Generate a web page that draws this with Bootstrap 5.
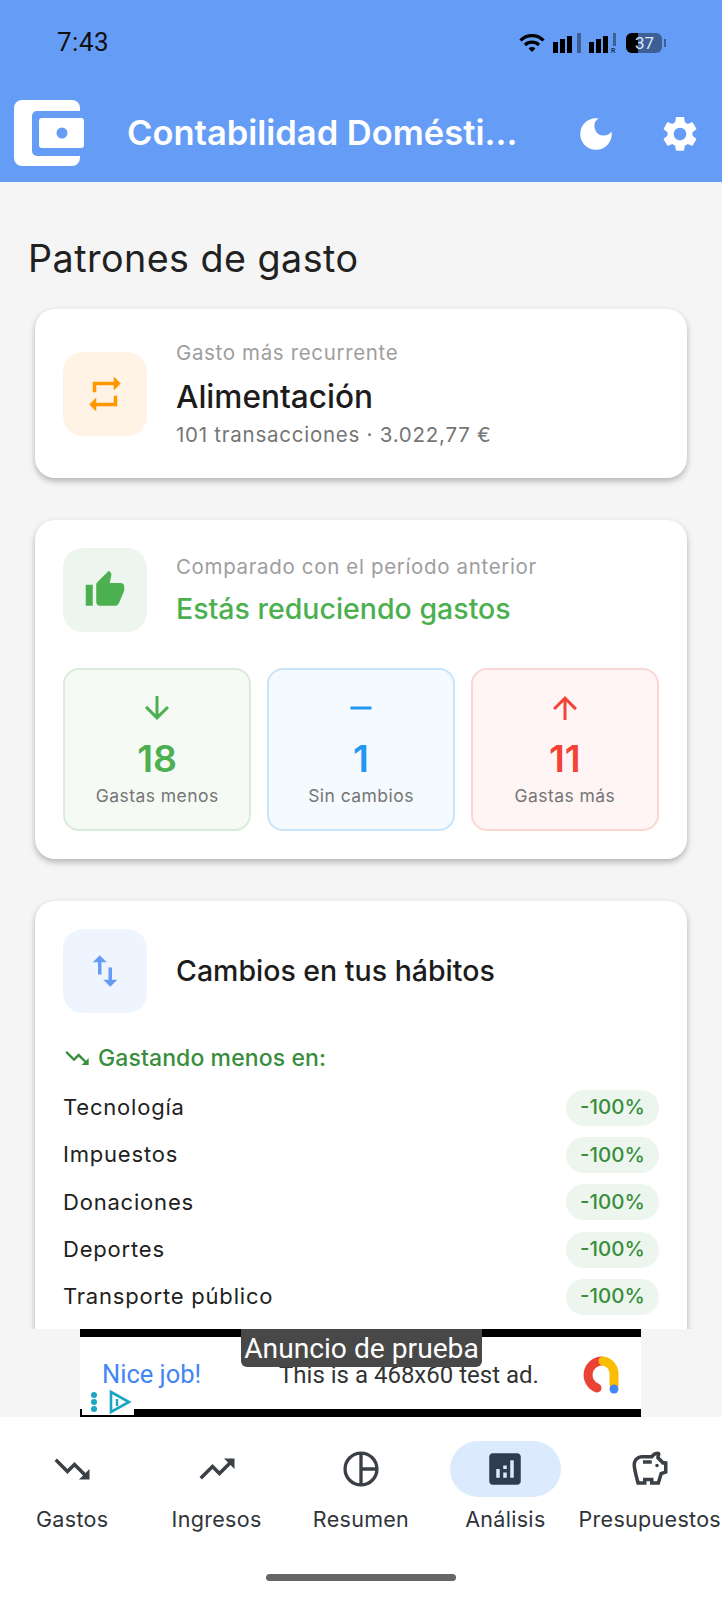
<!DOCTYPE html>
<html lang="es">
<head>
  <meta charset="UTF-8">
  <title>Contabilidad Doméstica</title>
  <meta name="viewport" content="width=device-width, initial-scale=1">
  <link href="https://cdn.jsdelivr.net/npm/bootstrap@5.3.0/dist/css/bootstrap.min.css" rel="stylesheet">
  <style>
    body { background: #f5f5f5; font-family: Inter, "Liberation Sans", sans-serif; color: #1f1f1f; }
    .app-shell { width: 722px; height: 1600px; overflow: hidden; }

    /* barra superior */
    .app-top { background: #659cf6; height: 182px; flex: none; }
    .status-row { height: 85px; padding: 0 56px 0 57px; color: #111; }
    .status-time { font-family: Roboto, sans-serif; font-size: 26px; letter-spacing: .5px; }
    .batt { width: 36px; height: 20px; border-radius: 6px; background: #3d5f96; overflow: hidden; }
    .batt-fill { width: 12px; background: #000; }
    .batt-num { font-family: Roboto, sans-serif; font-size: 17px; line-height: 20px; color: #dfe8f7; padding-left: 1px; }
    .batt-nub { width: 2px; height: 8px; background: #3d5f96; margin-left: 2px; }
    .tool-row { height: 97px; padding: 15px 0 0 14px; }
    .app-title { font-size: 34.5px; font-weight: 600; color: #fff; margin-left: 42px; line-height: 1; white-space: nowrap; }
    .tool-ico { fill: #fff; width: 42px; height: 42px; }

    /* contenido */
    .page-main { flex: 1 1 0; min-height: 0; overflow: hidden; padding: 54px 35px 0; }
    .page-title { font-size: 37.7px; font-weight: 400; line-height: 44px; margin: 0 0 29px -7px; color: #212121; letter-spacing: .45px; }
    .stat-card { border: 0; border-radius: 20px; background: #fff; box-shadow: 0 3px 6px rgba(0,0,0,.28); padding: 28px; margin-bottom: 42px; }
    .ico-box { width: 84px; height: 84px; border-radius: 20px; flex: none; margin-right: 29px; }
    .ico-box svg { width: 42px; height: 42px; }
    .ico-orange { background: #fff3e6; fill: #ff9800; }
    .ico-green { background: #edf6ee; fill: #4caf50; }
    .ico-blue { background: #eff5fe; fill: #659cf6; }
    .txt-hint { font-size: 20.5px; line-height: 26px; color: #9e9e9e; letter-spacing: .65px; }
    .txt-hint-top { line-height: 31px; }
    .txt-big { font-size: 31.6px; font-weight: 500; line-height: 44px; color: #1c1c1c; margin: 7px 0 1px; }
    .txt-sub { font-size: 20.5px; line-height: 30px; color: #757575; letter-spacing: .75px; }
    .txt-good { font-size: 28.5px; font-weight: 500; line-height: 34px; color: #4caf50; margin-top: 12px; }
    .txt-head { font-size: 28.5px; font-weight: 500; color: #1c1c1c; }
    .tile-row { margin-top: 36px; gap: 15.5px; }
    .tile { flex: 1 1 0; height: 163px; border-radius: 16px; border: 2px solid; padding-top: 20px; }
    .tile svg { width: 36px; height: 36px; display: block; }
    .tile-num { font-size: 37.5px; font-weight: 600; line-height: 44px; margin-top: 11px; }
    .tile-lbl { font-size: 17.5px; line-height: 22px; color: #757575; margin-top: 4px; letter-spacing: .45px; }
    .tile-g { background: #f5faf5; border-color: #d9ecda; color: #4caf50; fill: #4caf50; }
    .tile-b { background: #f4fafe; border-color: #c8e4fb; color: #2196f3; fill: #2196f3; }
    .tile-r { background: #fef5f4; border-color: #fbd6d3; color: #f44336; fill: #f44336; }
    .less-head { font-size: 23px; font-weight: 500; color: #388e3c; margin-top: 26px; line-height: 38px; margin-bottom: 7px; letter-spacing: .1px; }
    .less-head svg { width: 28px; height: 28px; fill: #388e3c; margin: 0 7px 0 0; }
    .hab-row { height: 47.3px; font-size: 22px; color: #212121; letter-spacing: .8px; }
    .hab-pill { width: 93px; height: 36px; border-radius: 18px; background: #edf6ee; color: #388e3c; font-size: 20.5px; font-weight: 500; letter-spacing: 0; }

    /* anuncio */
    .ad-slot { height: 88px; flex: none; background: #f5f5f5; }
    .ad-box { width: 561px; height: 88px; margin-left: 80px; background: #fff; border-top: 8px solid #000; border-bottom: 8px solid #000; padding: 0 22px; }
    .ad-nice { font-family: Roboto, sans-serif; font-size: 25.5px; color: #4285f4; width: 177px; margin-top: 3px; }
    .ad-line { font-family: Roboto, sans-serif; font-size: 24px; color: #333; width: 301px; white-space: nowrap; margin-top: 4px; }
    .ad-tip { left: 241px; top: 0; width: 241px; height: 38px; background: #484848; color: #fff; border-radius: 0 0 6px 6px; font-family: Roboto, sans-serif; font-size: 28.2px; padding-top: 3px; }
    .ad-flag { left: 82px; bottom: 2px; width: 52px; height: 27px; background: #fff; }

    /* navegacion inferior */
    .nav-bottom { background: #fff; height: 183px; flex: none; }
    .nav-cell { width: 144.4px; padding-top: 24px; color: #2f343a; fill: #3b4046; }
    .nav-pill { width: 111px; height: 56px; border-radius: 28px; }
    .nav-pill svg { width: 42px; height: 42px; }
    .nav-pill.on { background: #dbeafd; fill: #2f3c52; }
    .nav-lbl { font-size: 21.5px; line-height: 28px; margin-top: 8px; white-space: nowrap; letter-spacing: .3px; }
    .home-bar { width: 190px; height: 7px; border-radius: 4px; background: #666; margin: 41px auto 0; }
  </style>
</head>
<body>
<div class="app-shell d-flex flex-column">

  <!-- barra superior -->
  <header class="app-top">
    <div class="status-row d-flex align-items-center justify-content-between">
      <span class="status-time">7:43</span>
      <div class="d-flex align-items-center">
        <svg width="26" height="20" viewBox="0 0 26 20" fill="none" stroke="#000" stroke-width="3.2"><path d="M1.5 7.5a16 16 0 0 1 23 0"/><path d="M6 12a10 10 0 0 1 14 0"/><path d="M13 19l-3.4-3.6a4.8 4.8 0 0 1 6.8 0z" fill="#000" stroke="none"/></svg>
        <svg class="ms-2" width="28" height="22" viewBox="0 0 28 22"><path d="M0 10h5v11H0zM7 7h5v14H7zM14 4h5v17h-5z"/><path d="M24 1h4v20h-4z" fill="#3d5f96"/></svg>
        <svg class="ms-2" width="29" height="26" viewBox="0 -2 29 26"><path d="M0 10h5v11H0zM7 7h5v14H7zM14 4h5v17h-5z"/><path d="M24 1h3v13h-3z" fill="#3d5f96"/><text x="22" y="21" font-size="7" font-family="Roboto, sans-serif">R</text></svg>
        <div class="batt d-flex position-relative ms-2">
          <div class="batt-fill"></div>
          <span class="batt-num position-absolute top-0 start-0 w-100 text-center">37</span>
        </div>
        <div class="batt-nub"></div>
      </div>
    </div>
    <div class="tool-row d-flex align-items-start">
      <svg width="71" height="67" viewBox="0 0 71 67">
        <rect width="66" height="66" rx="8" fill="#fff"/>
        <rect x="18" y="11" width="53" height="45" rx="5" fill="#659cf6"/>
        <rect x="25" y="18" width="45" height="30" rx="3" fill="#fff"/>
        <circle cx="48" cy="33" r="5.5" fill="#659cf6"/>
      </svg>
      <div class="app-title mt-3">Contabilidad Domésti...</div>
      <div class="d-flex ms-auto" style="gap:42px;margin:13px 21px 0 0">
        <svg class="tool-ico" viewBox="0 0 24 24"><path d="M12 3a9 9 0 1 0 9 9c0-.46-.04-.92-.1-1.36a5.389 5.389 0 0 1-4.4 2.26 5.403 5.403 0 0 1-3.14-9.8c-.44-.06-.9-.1-1.36-.1z"/></svg>
        <svg class="tool-ico" viewBox="0 0 24 24"><path d="M19.14 12.94c.04-.3.06-.61.06-.94 0-.32-.02-.64-.07-.94l2.03-1.58a.49.49 0 0 0 .12-.61l-1.92-3.32a.488.488 0 0 0-.59-.29l-2.39.96c-.5-.38-1.03-.7-1.62-.94l-.36-2.54a.484.484 0 0 0-.48-.41h-3.84c-.24 0-.43.17-.47.41l-.36 2.54c-.59.24-1.13.57-1.62.94l-2.39-.96c-.22-.08-.47 0-.59.22L2.74 8.87c-.12.21-.08.47.12.61l2.03 1.58c-.05.3-.09.63-.09.94s.02.64.07.94l-2.03 1.58a.49.49 0 0 0-.12.61l1.92 3.32c.12.22.37.29.59.22l2.39-.96c.5.38 1.03.7 1.62.94l.36 2.54c.05.24.24.41.48.41h3.84c.24 0 .44-.17.47-.41l.36-2.54c.59-.24 1.13-.56 1.62-.94l2.39.96c.22.08.47 0 .59-.22l1.92-3.32c.12-.22.07-.47-.12-.61l-2.01-1.58zM12 15.6c-1.98 0-3.6-1.62-3.6-3.6s1.62-3.6 3.6-3.6 3.6 1.62 3.6 3.6-1.62 3.6-3.6 3.6z"/></svg>
      </div>
    </div>
  </header>

  <!-- contenido -->
  <main class="page-main">
    <h1 class="page-title">Patrones de gasto</h1>

    <div class="card stat-card">
      <div class="d-flex align-items-center">
        <div class="ico-box ico-orange d-flex align-items-center justify-content-center">
          <svg viewBox="0 0 24 24"><path d="M7 7h10v3l4-4-4-4v3H5v6h2V7zm10 10H7v-3l-4 4 4 4v-3h12v-6h-2v4z"/></svg>
        </div>
        <div>
          <div class="txt-hint txt-hint-top">Gasto más recurrente</div>
          <div class="txt-big">Alimentación</div>
          <div class="txt-sub">101 transacciones · 3.022,77 €</div>
        </div>
      </div>
    </div>

    <div class="card stat-card">
      <div class="d-flex align-items-center">
        <div class="ico-box ico-green d-flex align-items-center justify-content-center">
          <svg viewBox="0 0 24 24"><path d="M1 21h4V9H1v12zm22-11c0-1.1-.9-2-2-2h-6.31l.95-4.57.03-.32c0-.41-.17-.79-.44-1.06L14.17 1 7.59 7.59C7.22 7.95 7 8.45 7 9v10c0 1.1.9 2 2 2h9c.83 0 1.54-.5 1.84-1.22l3.02-7.05c.09-.23.14-.47.14-.73v-2z"/></svg>
        </div>
        <div>
          <div class="txt-hint">Comparado con el período anterior</div>
          <div class="txt-good">Estás reduciendo gastos</div>
        </div>
      </div>
      <div class="tile-row d-flex">
        <div class="tile tile-g d-flex flex-column align-items-center">
          <svg viewBox="0 0 24 24"><path d="M20 12l-1.41-1.41L13 16.17V4h-2v12.17l-5.58-5.59L4 12l8 8 8-8z"/></svg>
          <div class="tile-num">18</div>
          <div class="tile-lbl">Gastas menos</div>
        </div>
        <div class="tile tile-b d-flex flex-column align-items-center">
          <svg viewBox="0 0 24 24"><path d="M19 13H5v-2h14v2z"/></svg>
          <div class="tile-num">1</div>
          <div class="tile-lbl">Sin cambios</div>
        </div>
        <div class="tile tile-r d-flex flex-column align-items-center">
          <svg viewBox="0 0 24 24"><path d="M4 12l1.41 1.41L11 7.83V20h2V7.83l5.58 5.59L20 12l-8-8-8 8z"/></svg>
          <div class="tile-num">11</div>
          <div class="tile-lbl">Gastas más</div>
        </div>
      </div>
    </div>

    <div class="card stat-card">
      <div class="d-flex align-items-center">
        <div class="ico-box ico-blue d-flex align-items-center justify-content-center">
          <svg viewBox="0 0 24 24"><path d="M16 17.01V10h-2v7.01h-3L15 21l4-3.99h-3zM9 3L5 6.99h3V14h2V6.99h3L9 3z"/></svg>
        </div>
        <div class="txt-head">Cambios en tus hábitos</div>
      </div>
      <div class="less-head d-flex align-items-center">
        <svg viewBox="0 0 24 24"><path d="M16 18l2.29-2.29-4.88-4.88-4 4L2 7.41 3.41 6l6 6 4-4 6.3 6.29L22 12v6z"/></svg>
        Gastando menos en:
      </div>
      <div class="hab-row d-flex align-items-center justify-content-between"><span>Tecnología</span><span class="hab-pill d-flex align-items-center justify-content-center">-100%</span></div>
      <div class="hab-row d-flex align-items-center justify-content-between"><span>Impuestos</span><span class="hab-pill d-flex align-items-center justify-content-center">-100%</span></div>
      <div class="hab-row d-flex align-items-center justify-content-between"><span>Donaciones</span><span class="hab-pill d-flex align-items-center justify-content-center">-100%</span></div>
      <div class="hab-row d-flex align-items-center justify-content-between"><span>Deportes</span><span class="hab-pill d-flex align-items-center justify-content-center">-100%</span></div>
      <div class="hab-row d-flex align-items-center justify-content-between"><span>Transporte público</span><span class="hab-pill d-flex align-items-center justify-content-center">-100%</span></div>
    </div>
  </main>

  <!-- anuncio -->
  <div class="ad-slot position-relative">
    <div class="ad-box d-flex align-items-center">
      <span class="ad-nice">Nice job!</span>
      <span class="ad-line">This is a 468x60 test ad.</span>
      <svg width="38" height="38" viewBox="0 0 38 38" fill="none" stroke-width="9" stroke-linecap="round" class="ms-auto" style="margin-top:4px">
        <path d="M20 5a14 14 0 0 0-4 27" stroke="#ea4335"/>
        <path d="M22 5a13 13 0 0 1 11 13v11" stroke="#fbbc04"/>
        <circle cx="33" cy="33" r="4.5" fill="#4285f4" stroke="none"/>
      </svg>
    </div>
    <div class="ad-tip position-absolute d-flex align-items-center justify-content-center">Anuncio de prueba</div>
    <div class="ad-flag position-absolute d-flex align-items-center ps-1">
      <svg width="46" height="26" viewBox="0 0 46 26">
        <circle cx="8" cy="6" r="3" fill="#1ba5c4"/><circle cx="8" cy="13" r="3" fill="#1ba5c4"/><circle cx="8" cy="20" r="3" fill="#1ba5c4"/>
        <path d="M25 3l18 10-18 10z" fill="none" stroke="#1ba5c4" stroke-width="2.6"/>
        <path d="M31 10v7" stroke="#1ba5c4" stroke-width="2.4"/>
      </svg>
    </div>
  </div>

  <!-- navegacion inferior -->
  <nav class="nav-bottom">
    <div class="d-flex">
      <div class="nav-cell d-flex flex-column align-items-center">
        <div class="nav-pill d-flex align-items-center justify-content-center"><svg viewBox="0 0 24 24"><path d="M16 18l2.29-2.29-4.88-4.88-4 4L2 7.41 3.41 6l6 6 4-4 6.3 6.29L22 12v6z"/></svg></div>
        <div class="nav-lbl">Gastos</div>
      </div>
      <div class="nav-cell d-flex flex-column align-items-center">
        <div class="nav-pill d-flex align-items-center justify-content-center"><svg viewBox="0 0 24 24"><path d="M16 6l2.29 2.29-4.88 4.88-4-4L2 16.59 3.41 18l6-6 4 4 6.3-6.29L22 12V6z"/></svg></div>
        <div class="nav-lbl">Ingresos</div>
      </div>
      <div class="nav-cell d-flex flex-column align-items-center">
        <div class="nav-pill d-flex align-items-center justify-content-center"><svg viewBox="0 0 24 24" fill="none" stroke="#3b4046" stroke-width="1.9"><circle cx="12" cy="12" r="9.1"/><path d="M12 3v18M12 12h9"/></svg></div>
        <div class="nav-lbl">Resumen</div>
      </div>
      <div class="nav-cell d-flex flex-column align-items-center">
        <div class="nav-pill on d-flex align-items-center justify-content-center"><svg viewBox="0 0 24 24"><path d="M19 3H5c-1.1 0-2 .9-2 2v14c0 1.1.9 2 2 2h14c1.1 0 2-.9 2-2V5c0-1.1-.9-2-2-2zM9 17H7v-5h2v5zm4 0h-2v-3h2v3zm0-5h-2v-2h2v2zm4 5h-2V7h2v10z"/></svg></div>
        <div class="nav-lbl">Análisis</div>
      </div>
      <div class="nav-cell d-flex flex-column align-items-center">
        <div class="nav-pill d-flex align-items-center justify-content-center"><svg viewBox="0 0 24 24"><path d="M15 10c0-.55.45-1 1-1s1 .45 1 1-.45 1-1 1-1-.45-1-1zM8 9h5V7H8v2zm14-1.5v6.97l-2.82.94L17.5 21H12v-2h-2v2H4.5S2 12.54 2 9.5 4.46 4 7.5 4h5c.91-1.21 2.36-2 4-2 .83 0 1.5.67 1.5 1.5 0 .21-.04.4-.12.58-.14.32-.26.69-.32 1.09l2.27 2.27L22 7.5zm-2 2h-1L15.5 6c0-.65.09-1.29.26-1.91-.97.25-1.76.97-2.09 1.91H7.5C5.57 6 4 7.57 4 9.5c0 1.88 1.22 6.65 2.01 9.5H8v-2h6v2h2.01l1.55-5.15 2.44-.82V9.5z"/></svg></div>
        <div class="nav-lbl">Presupuestos</div>
      </div>
    </div>
    <div class="home-bar"></div>
  </nav>
</div>
<script src="https://cdn.jsdelivr.net/npm/bootstrap@5.3.0/dist/js/bootstrap.bundle.min.js"></script>
</body>
</html>
